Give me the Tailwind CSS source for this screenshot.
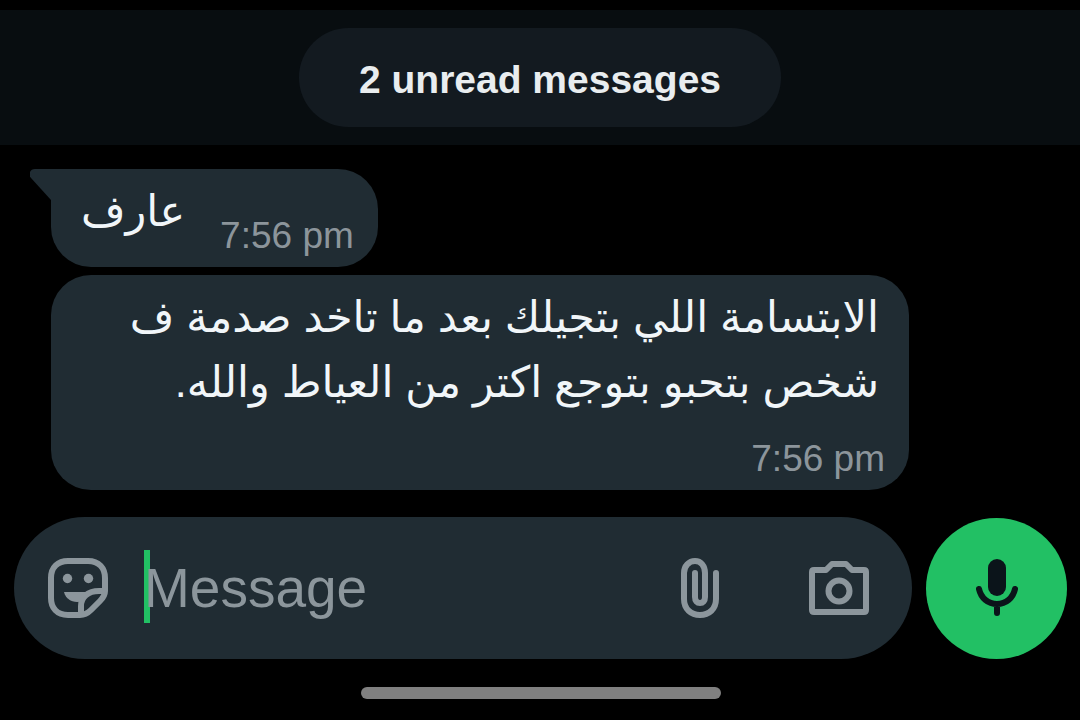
<!DOCTYPE html>
<html lang="en">
<head>
<meta charset="utf-8">
<meta name="viewport" content="width=device-width, initial-scale=1">
<title>Chat</title>
<script src="https://cdn.jsdelivr.net/npm/@tailwindcss/browser@4"></script>
</head>
<body class="flex min-h-screen flex-col bg-black pt-[10px] font-['Liberation_Sans',sans-serif] text-[#f1f6f9]">
  <header class="flex justify-center bg-[#080d10] pt-[18px] pb-[18px]">
    <div class="rounded-full bg-[#131a20] px-[60px] pt-[28px] pb-[23px] text-[39px] leading-[48px] font-bold text-[#e9edef]">2 unread messages</div>
  </header>

  <main class="flex flex-1 flex-col items-start gap-2 pt-6 pr-[171px] pl-[51px]">
    <article class="relative flex items-end gap-[35px] rounded-[40px] rounded-tl-none bg-[#202c33] pr-6 pb-[9px] pl-[30px]">
      <svg class="absolute top-0 -left-[21px] h-8 w-[22px]" viewBox="0 0 22 32" fill="#202c33" aria-hidden="true"><path d="M22 0H5C0 0-2 5 1 9L21 31H22Z"/></svg>
      <p dir="rtl" lang="ar" class="pb-1 font-['DejaVu_Sans',sans-serif] text-[43px] leading-[85px]">عارف</p>
      <time class="text-[37px] leading-[44px] text-[#8c959b]">7:56 pm</time>
    </article>

    <article class="flex w-full flex-col rounded-[40px] bg-[#202c33] pt-[10px] pr-6 pb-[9px] pl-[30px]">
      <p dir="rtl" lang="ar" class="pr-[6px] font-['Liberation_Sans','DejaVu_Sans',sans-serif] text-[43px] leading-[65px] whitespace-nowrap">الابتسامة اللي بتجيلك بعد ما تاخد صدمة ف<br>شخص بتحبو بتوجع اكتر من العياط والله.</p>
      <time class="mt-[22px] self-end text-[37px] leading-[44px] text-[#8c959b]">7:56 pm</time>
    </article>
  </main>

  <footer class="pr-[13px] pb-[21px] pl-[14px]">
    <form class="flex items-center gap-[14px]">
      <div class="flex h-[142px] min-w-0 flex-1 items-center rounded-full bg-[#202c33] pr-[43px] pl-[34px] text-[#8c969c]">
        <button type="button" aria-label="Stickers" class="shrink-0">
          <svg class="size-[60px]" viewBox="0 0 60 60" fill="none" stroke="currentColor" stroke-width="6" aria-hidden="true">
            <path d="M20 3H40C51 3 57 10 57 20V33C57 37 55 40 52 43L43 52C39 56 36 57 32 57H20C9 57 3 50 3 40V20C3 9 10 3 20 3Z"/>
            <path d="M57 33H51C40 33 33 39 33 48V56"/>
            <path d="M16 34H42L35 43C26 46 18 42 16 34Z" fill="currentColor" stroke="none"/>
            <circle cx="19.500" cy="20.500" r="4.700" fill="currentColor" stroke="none"/>
            <circle cx="40.500" cy="20.500" r="4.700" fill="currentColor" stroke="none"/>
          </svg>
        </button>
        <div class="relative ml-9 min-w-0 flex-1">
          <span class="absolute top-0 left-0 h-[73px] w-[6px] bg-[#22c064]" aria-hidden="true"></span>
          <input type="text" aria-label="Message" placeholder="Message" class="relative block h-[77px] w-full bg-transparent text-[55px] text-[#f1f6f9] caret-[#22c064] outline-none placeholder:text-[#8c969c]">
        </div>
        <button type="button" aria-label="Attach" class="shrink-0">
          <svg class="h-[60px] w-[38px]" viewBox="0 0 38 60" fill="none" stroke="currentColor" stroke-width="6" stroke-linecap="round" aria-hidden="true"><path d="M35 15V41C35 51 28 57 19 57S3 51 3 41V15C3 8 8 3 14 3S24 8 24 15V39C24 43 22 45 19 45S14 43 14 39V15"/></svg>
        </button>
        <button type="button" aria-label="Camera" class="ml-[90px] shrink-0">
          <svg class="h-[54px] w-[60px]" viewBox="0 0 60 54" fill="none" stroke="currentColor" stroke-width="6" stroke-linejoin="round" aria-hidden="true"><path d="M5 9H17L23 3H37L43 9H55Q57 9 57 11V49Q57 51 55 51H5Q3 51 3 49V11Q3 9 5 9Z"/><circle cx="30" cy="30" r="10.500"/></svg>
        </button>
      </div>
      <button type="button" aria-label="Record voice message" class="flex size-[141px] shrink-0 items-center justify-center rounded-full bg-[#22c064]">
        <svg class="h-[58px] w-[42px]" viewBox="0 0 42 58" fill="none" stroke="#0b141a" stroke-width="6" stroke-linecap="round" aria-hidden="true"><rect x="12" y="0" width="18" height="37" rx="9" fill="#0b141a" stroke="none"/><path d="M3 30C5 39 12 45 21 45S37 39 39 30M21 45V54"/></svg>
      </button>
    </form>
    <div class="mx-auto mt-[28px] h-3 w-[360px] max-w-full rounded-full bg-[#808080]"></div>
  </footer>
</body>
</html>
